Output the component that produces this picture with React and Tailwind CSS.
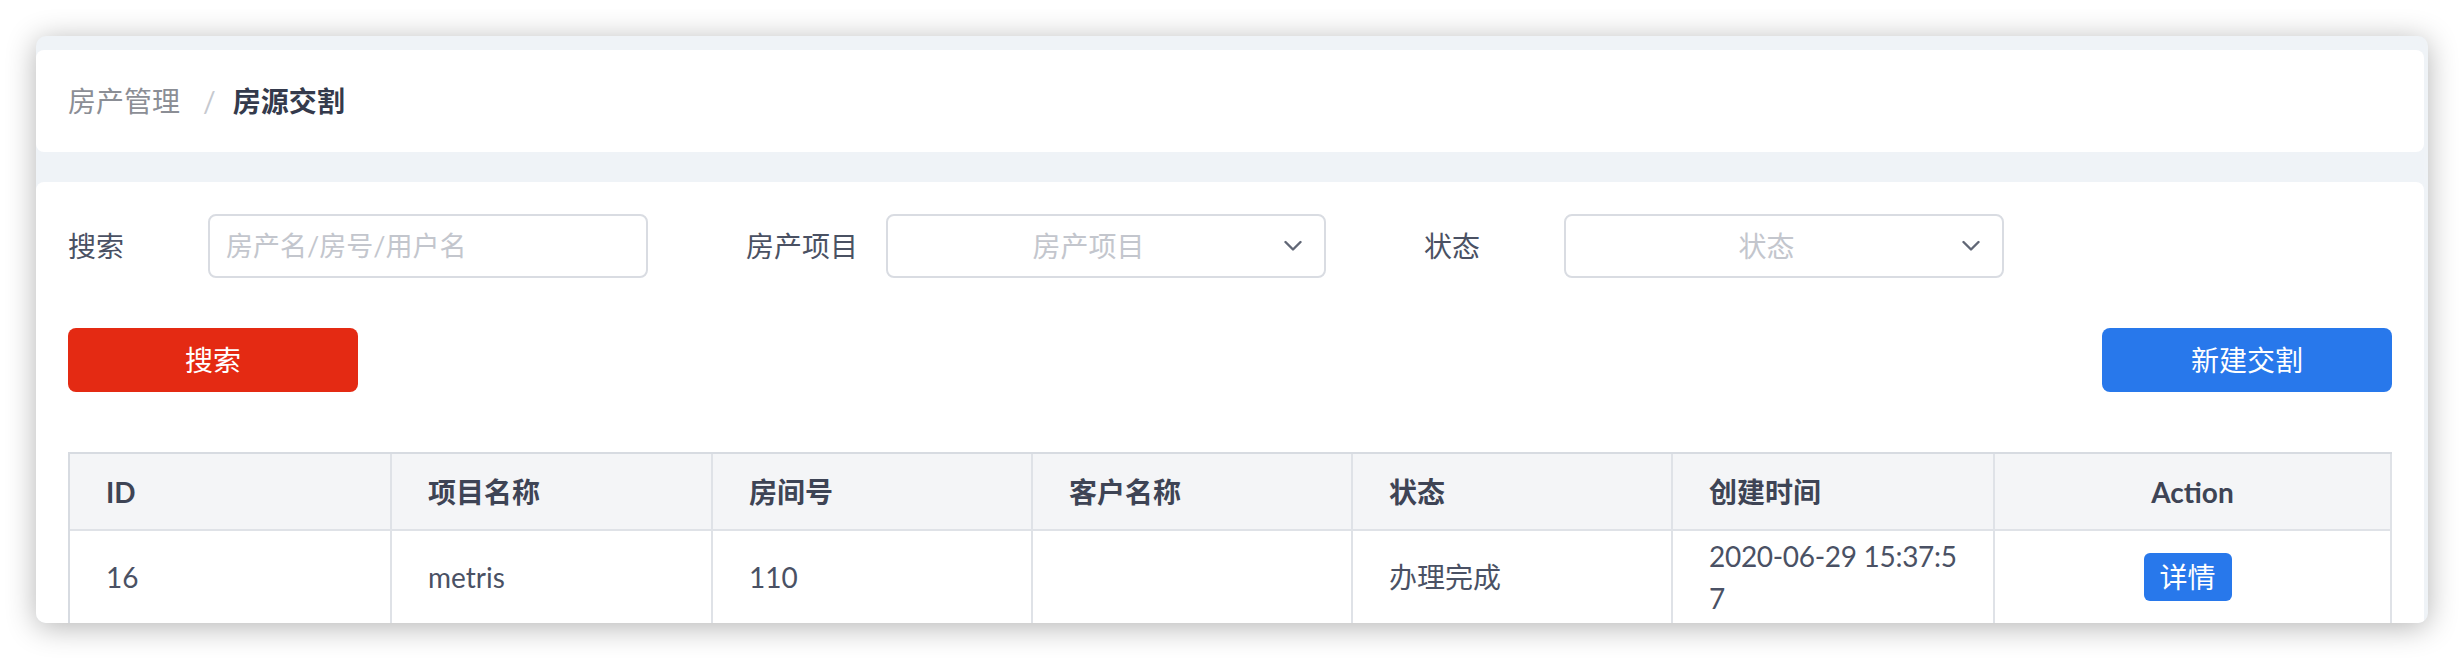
import React from "react";

const FONT = "font-['Lato','Noto_Sans_CJK_SC',sans-serif]";

function Chevron() {
  return (
    <svg width="18" height="11" viewBox="0 0 18 11" fill="none" className="absolute right-[22px] top-1/2 -translate-y-1/2">
      <path d="M1.5 1.5L9 9L16.5 1.5" stroke="#616776" strokeWidth="2.4" strokeLinecap="round" strokeLinejoin="round" />
    </svg>
  );
}

function Field({ label, children }) {
  return (
    <div className="flex items-center">
      <div className="w-[140px] text-[28px] text-[#4a5163] leading-none">{label}</div>
      {children}
    </div>
  );
}

function SelectBox({ placeholder }) {
  return (
    <div className="relative flex h-[64px] w-[440px] items-center rounded-[8px] border-2 border-[#d9dce2] bg-white pr-[35px]">
      <span className="flex-1 text-center text-[28px] text-[#c3c6cd]">{placeholder}</span>
      <Chevron />
    </div>
  );
}

const headers = ["ID", "项目名称", "房间号", "客户名称", "状态", "创建时间", "Action"];

export default function App() {
  return (
    <div className={`${FONT} h-[660px] w-[2464px] overflow-hidden bg-white pl-[36px] pt-[36px]`}>
      <div className="flex h-[587px] w-[2392px] flex-col overflow-hidden rounded-[10px] bg-[#eff3f7] pt-[14px] pr-[4px] shadow-[0_4px_30px_rgba(0,0,0,0.3)]">
        {/* breadcrumb card */}
        <div className="flex h-[102px] shrink-0 items-center rounded-[8px] bg-white px-[32px] text-[28px]">
          <span className="text-[#8b8e95]">房产管理</span>
          <span className="ml-[23px] mr-[17px] text-[#c6c9cf]">/</span>
          <span className="font-bold text-[#343a4c]">房源交割</span>
        </div>

        {/* main card */}
        <div className="mt-[30px] flex-1 rounded-t-[8px] bg-white px-[32px] pt-[32px]">
          <div className="flex items-center gap-[98px]">
            <Field label="搜索">
              <div className="flex h-[64px] w-[440px] items-center rounded-[8px] border-2 border-[#d9dce2] bg-white pl-[16px]">
                <span className="text-[27px] text-[#c3c6cd]">房产名/房号/用户名</span>
              </div>
            </Field>
            <Field label="房产项目">
              <SelectBox placeholder="房产项目" />
            </Field>
            <Field label="状态">
              <SelectBox placeholder="状态" />
            </Field>
          </div>

          <div className="mt-[50px] flex items-center justify-between">
            <button className="h-[64px] w-[290px] rounded-[8px] bg-[#e42a13] text-[28px] text-white">搜索</button>
            <button className="h-[64px] w-[290px] rounded-[8px] bg-[#2878eb] text-[28px] text-white">新建交割</button>
          </div>

          {/* table */}
          <div className="mt-[60px] grid grid-cols-[322px_321px_320px_320px_320px_322px_1fr] border-l-2 border-t-2 border-[#d7dbe1]">
            {headers.map((h, i) => (
              <div
                key={h}
                className={`flex h-[77px] items-center border-b-2 border-r-2 border-[#dfe2e7] bg-[#f4f5f7] text-[28px] font-bold text-[#3e4455] ${
                  i === 6 ? "justify-center" : "pl-[36px]"
                }`}
              >
                {h}
              </div>
            ))}
            {[
              "16",
              "metris",
              "110",
              "",
              "办理完成",
              null,
              "btn",
            ].map((c, i) => (
              <div
                key={i}
                className={`flex items-center border-b-2 border-r-2 border-[#dfe2e7] py-[4px] text-[28px] leading-[42px] text-[#4a5164] ${
                  i === 6 ? "justify-center pr-[10px]" : "pl-[36px]"
                }`}
              >
                {c === null ? (
                  <span className="tracking-[-0.3px]">
                    2020-06-29 15:37:5
                    <br />7
                  </span>
                ) : c === "btn" ? (
                  <button className="flex h-[48px] w-[88px] items-center justify-center rounded-[6px] bg-[#2878eb] text-[28px] text-white">详情</button>
                ) : (
                  c
                )}
              </div>
            ))}
          </div>
        </div>
      </div>
    </div>
  );
}
